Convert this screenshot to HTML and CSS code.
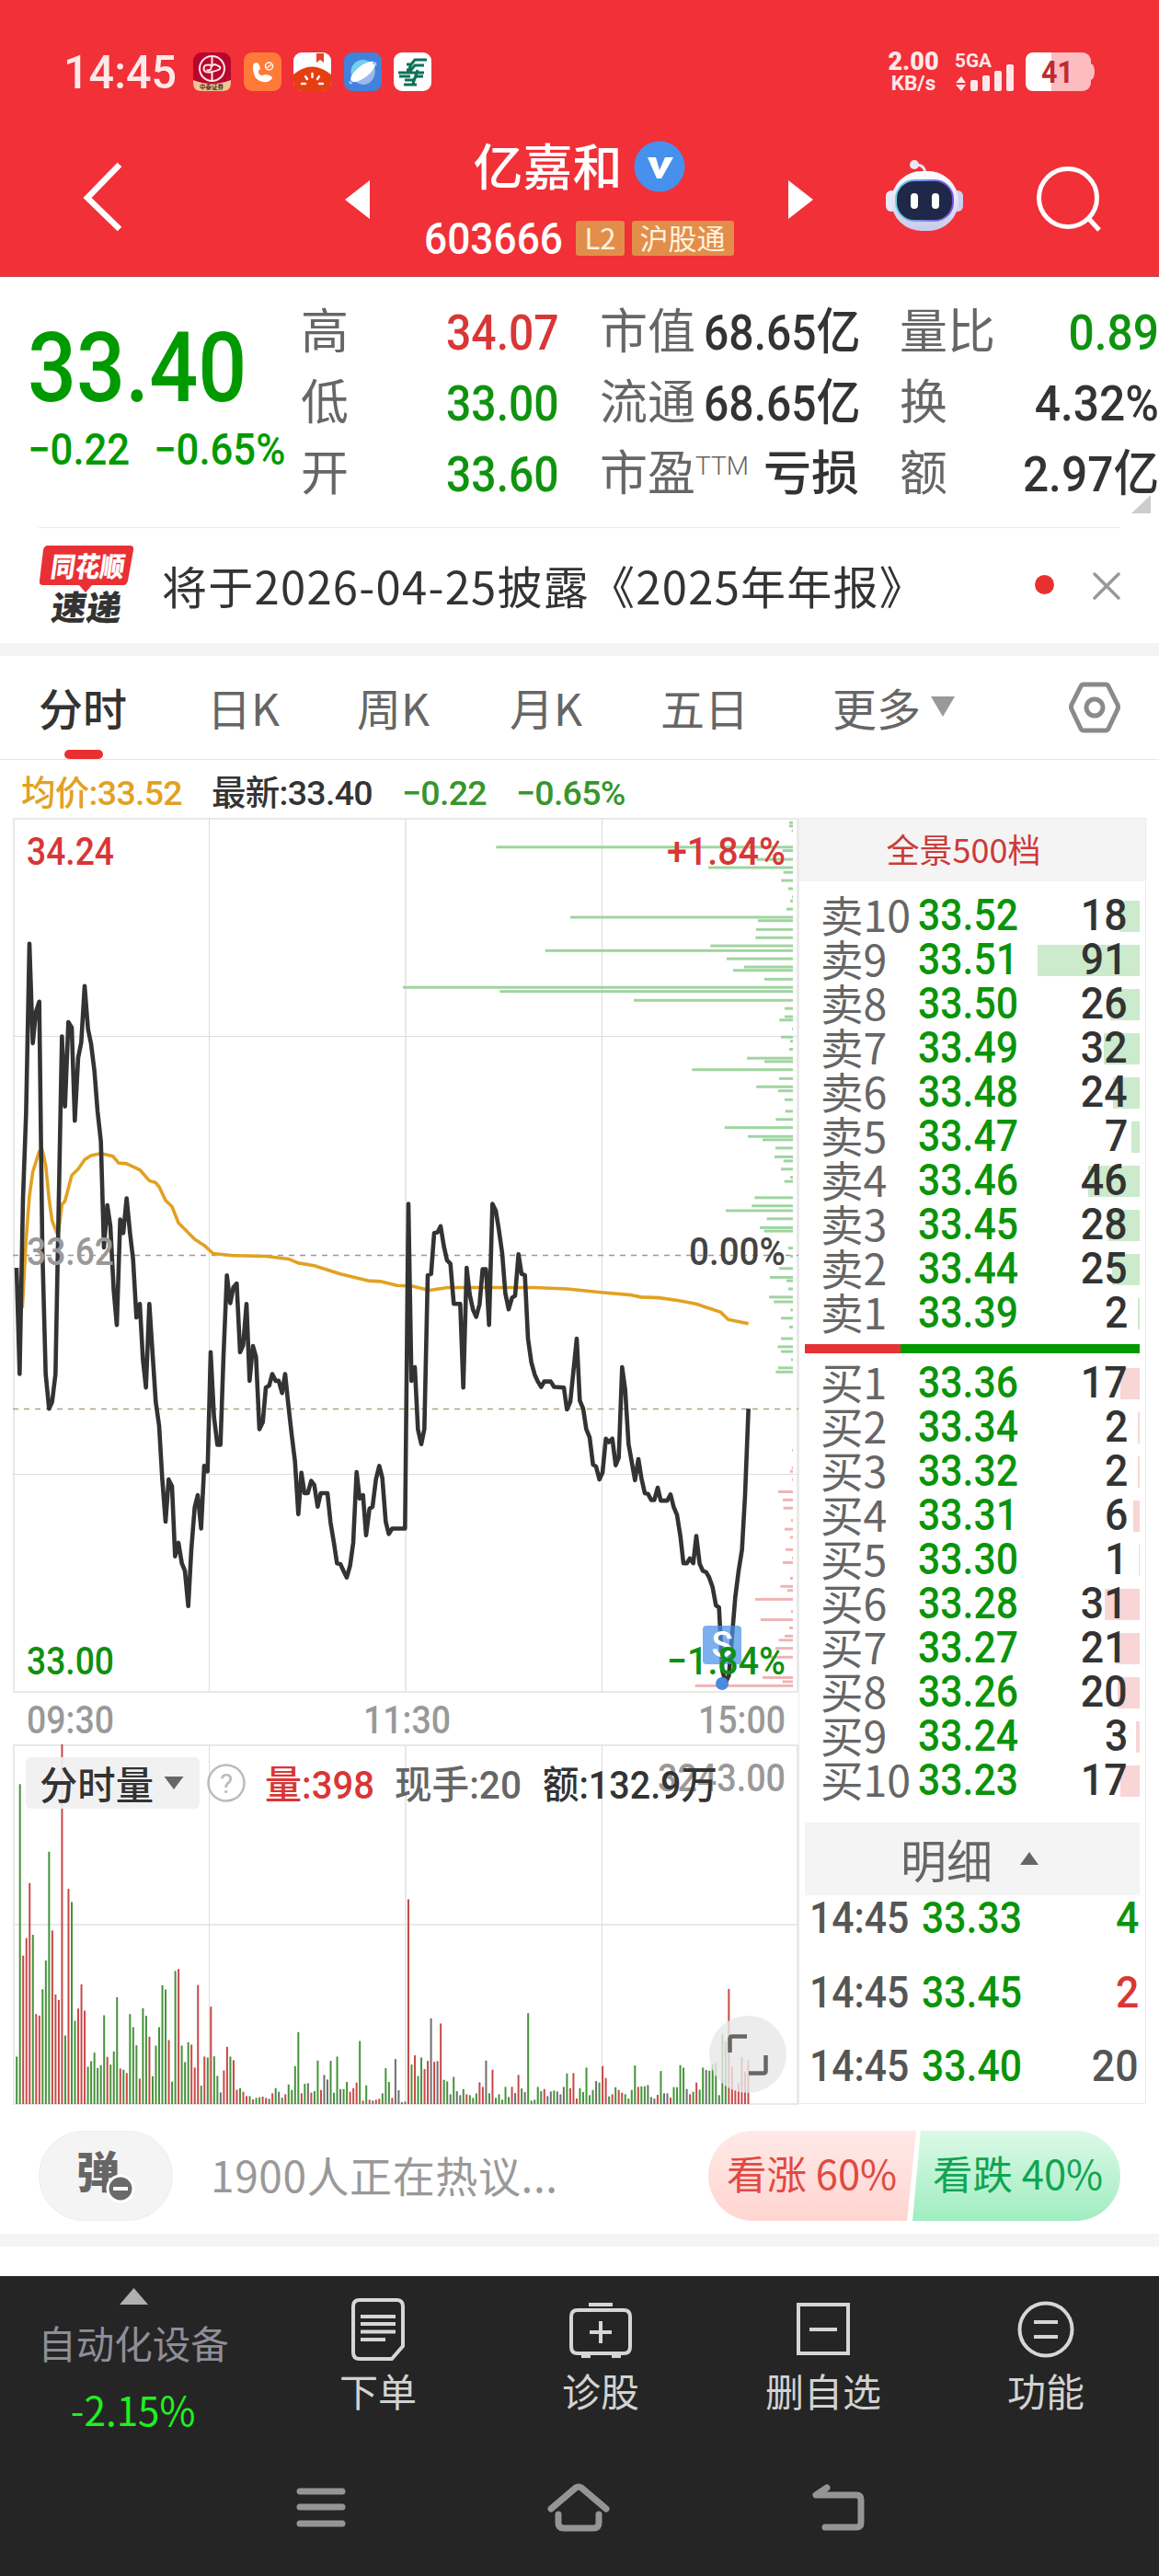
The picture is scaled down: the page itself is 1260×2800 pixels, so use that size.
FILE: index.html
```html
<!DOCTYPE html>
<html lang="zh-CN">
<head>
    <meta charset="UTF-8">
    <meta name="viewport" content="width=device-width, initial-scale=1.0">
    <title>亿嘉和 603666</title>
    <link rel="stylesheet" href="styles.css">
</head>
<body>
    <header class="header">
        <div class="status-bar">
            <span class="clock num">14:45</span>
            <div class="app-icons">
                <svg width="41" height="42" viewBox="0 0 41 42">
                    <rect width="41" height="42" rx="9" fill="#b8062f"/>
                    <path d="M0 30Q20 38 41 30V33Q41 42 32 42H9Q0 42 0 33Z" fill="#efc795"/>
                    <g fill="none" stroke="#ffe4e6" stroke-width="2"><circle cx="20.500" cy="17.500" r="13.500"/><path d="M20.500 4v10M20.500 22v9M20.500 14q-9-2-9 3.500t9 3.500q9-2 9-4t-6-4q-4 1-4 4t-5 2"/></g>
                    <text x="7" y="40" font-size="6.500" font-weight="700" fill="#5a3020">中泰证券</text>
                </svg>
                <svg width="41" height="42" viewBox="0 0 41 42">
                    <rect width="41" height="42" rx="9" fill="#ff7a38"/>
                    <path d="M11 12q4-3 6 2l1 4q-3 2-2 4 1 3 4 3l4-1q7 1 7 4-3 5-10 4-8-1-10-9-2-8 0-11z" fill="#fff"/>
                    <circle cx="27.500" cy="15" r="4" fill="none" stroke="#fff" stroke-width="1.500"/><path d="M25 17l5-4" stroke="#fff" stroke-width="1.500"/>
                </svg>
                <svg width="41" height="42" viewBox="0 0 41 42">
                    <rect width="41" height="42" rx="9" fill="#fff"/>
                    <path d="M25 1h8v10l-4-3-4 3z" fill="#e0452a"/>
                    <path d="M0 24Q20 7 41 24V33Q41 42 32 42H9Q0 42 0 33Z" fill="#e63e12"/>
                    <g stroke="#fff" stroke-width="2.400" stroke-linecap="round"><path d="M20.500 23v4M13 26l2 3M28 26l-2 3M9 34h4M28 34h4"/></g>
                </svg>
                <svg width="41" height="42" viewBox="0 0 41 42">
                    <rect width="41" height="42" rx="9" fill="#4281dc"/>
                    <circle cx="20.500" cy="21" r="13" fill="#73d0f0"/>
                    <path d="M33 14q3 14-7 20-9 3-15-4z" fill="#9bb8ec"/>
                    <ellipse cx="20.500" cy="21" rx="16" ry="6.500" transform="rotate(-38 20.500 21)" fill="#fff"/>
                    <path d="M7 31q-2 3 2 2M31 12q5-2 3 3" fill="none" stroke="#a9c4f2" stroke-width="2"/>
                </svg>
                <svg width="41" height="42" viewBox="0 0 41 42">
                    <rect width="41" height="42" rx="9" fill="#fff"/>
                    <g fill="none" stroke="#0c7157" stroke-width="3"><path d="M36 8H23l-4 5h-5M33 14H23l-4 5h-5M5 22h28M6 26h12M32 26h-7l-4 4h-9M25 35H11M19 13l-4 9M26 19l-5 15"/></g>
                </svg>
            </div>
            <div class="net-speed"><b>2.00</b><span>KB/s</span></div>
            <svg class="signal" width="66" height="42" viewBox="0 0 66 42">
                <text x="0" y="15.500" font-size="21" font-weight="700" fill="#ffe8ea" textLength="40" lengthAdjust="spacingAndGlyphs">5GA</text>
                <g fill="#ffe8ea"><path d="M1 33l6-7 5 7zM1 35l6 7 5-7z"/><rect x="17" y="30" width="8" height="12" rx="2"/><rect x="30" y="25" width="8" height="17" rx="2"/><rect x="43" y="20" width="8" height="22" rx="2"/><rect x="56" y="13" width="8" height="29" rx="2"/></g>
            </svg>
            <svg width="76" height="42" viewBox="0 0 76 42">
                <rect width="71" height="42" rx="9" fill="#fcbcc0"/><path d="M71 12q4 2 4 9t-4 9z" fill="#fcbcc0"/>
                <path d="M9 0H28V42H9Q0 42 0 33V9Q0 0 9 0Z" fill="#fff"/>
                <text x="17" y="33" font-size="33" font-weight="700" fill="#c02a2e" textLength="35" lengthAdjust="spacingAndGlyphs">41</text>
            </svg>
        </div>
        <div class="title-bar">
            <svg class="back" width="46" height="78" viewBox="0 0 46 78"><path d="M41 3L6 39l35 34" fill="none" stroke="#fff" stroke-width="6.500"/></svg>
            <svg width="27" height="42" viewBox="0 0 27 42"><path d="M27 0v42L0 21z" fill="#fff"/></svg>
            <div class="title">
                <div class="name">亿嘉和
                    <svg width="56" height="56" viewBox="0 0 56 56"><circle cx="28" cy="28" r="27.500" fill="#4791ec"/><path d="M15 18h9l4 14 6-14h9L30 41h-5z" fill="#fff"/></svg>
                </div>
                <div class="code">
                    <svg width="152" height="44" viewBox="0 0 152 44"><text x="0" y="41" font-size="49" font-weight="500" fill="#fff" textLength="151" lengthAdjust="spacingAndGlyphs">603666</text></svg>
                    <span class="tag">L2</span><span class="tag">沪股通</span>
                </div>
            </div>
            <svg width="27" height="42" viewBox="0 0 27 42"><path d="M0 0v42l27-21z" fill="#fff"/></svg>
            <svg class="robot" width="84" height="78" viewBox="0 0 84 78">
                <defs>
                    <linearGradient id="shell" x1="0" y1="0" x2="0" y2="1"><stop offset="0" stop-color="#fff"/><stop offset="1" stop-color="#c9c9ec"/></linearGradient>
                    <linearGradient id="rim" x1="0" y1="0" x2="1" y2="0"><stop offset="0" stop-color="#6bd0e8"/><stop offset="1" stop-color="#7a50e0"/></linearGradient>
                </defs>
                <path d="M31 5q11-1 12 9" fill="none" stroke="#e2e2f4" stroke-width="3"/><circle cx="31" cy="5" r="5" fill="#e8e8f8"/>
                <rect x="0" y="33" width="12" height="23" rx="6" fill="#e8e8f8"/><rect x="72" y="33" width="12" height="23" rx="6" fill="#cfcff0"/>
                <rect x="6" y="12" width="73" height="65" rx="33" fill="url(#shell)"/>
                <rect x="11" y="22" width="62" height="44" rx="20" fill="#1f2848" stroke="url(#rim)" stroke-width="2"/>
                <rect x="27" y="36" width="8" height="17" rx="4" fill="#fff"/><rect x="50" y="36" width="8" height="17" rx="4" fill="#fff"/>
            </svg>
            <svg class="search" width="72" height="72" viewBox="0 0 72 72" fill="none" stroke="#fff" stroke-width="5"><circle cx="35" cy="35" r="31.500"/><path d="M57 57l12 13"/></svg>
        </div>
    </header>

    <section class="quote">
        <div class="price-box">
            <div class="price num">33.40</div>
            <div class="change"><span class="num">−0.22</span><span class="num">−0.65%</span></div>
        </div>
        <div class="stats">
            <span>高</span><b class="num red">34.07</b><span>市值</span><b class="num">68.65亿</b><span>量比</span><b class="num green">0.89</b>
            <span>低</span><b class="num green">33.00</b><span>流通</span><b class="num">68.65亿</b><span>换</span><b class="num">4.32%</b>
            <span>开</span><b class="num green">33.60</b><span>市盈<sup>TTM</sup></span><b>亏损</b><span>额</span><b class="num">2.97亿</b>
        </div>
        <i class="corner"></i>
    </section>

    <section class="news">
        <svg width="106" height="90" viewBox="0 0 106 90">
            <path d="M10 1h89q5 0 4 5l-6 33q-1 5-5 5H58l-7 8-7-8H5q-5 0-4-5L5 6q1-5 5-5z" fill="#e93034"/>
            <g transform="skewX(-8)" font-weight="900"><text x="17" y="35" font-size="30" fill="#fff" textLength="80" lengthAdjust="spacingAndGlyphs">同花顺</text><text x="24" y="82" font-size="37" fill="#333" textLength="76" lengthAdjust="spacingAndGlyphs">速递</text></g>
        </svg>
        <span class="news-text">将于2026-04-25披露《2025年年报》</span>
        <i class="dot"></i>
        <svg width="30" height="30" viewBox="0 0 30 30"><path d="M2 2l26 26M28 2L2 28" stroke="#999" stroke-width="3.500" stroke-linecap="round"/></svg>
    </section>

    <nav class="tabs">
        <a class="active">分时</a><a>日K</a><a>周K</a><a>月K</a><a>五日</a>
        <a class="more">更多<svg width="26" height="22" viewBox="0 0 26 22"><path d="M0 0h26L13 22z" fill="#999"/></svg></a>
        <svg width="58" height="56" viewBox="0 0 58 56" fill="none" stroke="#8a8a8a" stroke-width="5"><path d="M17 3h24q2 0 3 2l10 20q1 3 0 5L44 51q-1 2-3 2H17q-2 0-3-2L4 30q-1-2 0-5L14 5q1-2 3-2z"/><circle cx="29" cy="28" r="9"/></svg>
    </nav>

    <div class="info-line">
        <span class="avg">均价:33.52</span><span>最新:33.40</span><span class="green">−0.22</span><span class="green">−0.65%</span>
    </div>

    <main class="market">
        <svg class="charts" width="856" height="1399" viewBox="14 889 856 1399">
            <g fill="none" stroke="#e9e9e9" stroke-width="2">
                <path d="M14 890H868M14 1839H868M14 1897H868M14 2092H868M14 2287H868M15 889V1839M867 889V1839M441 889V1839M15 1896V2287M867 1896V2287M441 1896V2287"/>
                <path d="M14 1126.500H868M14 1602.500H868M227.500 889V1839M654.500 889V1839M227.500 1896V2287M654.500 1896V2287" stroke="#ddd" stroke-width="1"/>
            </g>
            <g fill="none" stroke-width="1.300" stroke-dasharray="6 6"><path d="M14 1364.500H868" stroke="#999"/><path d="M14 1531.500H868" stroke="#b0a080"/></g>
            <!-- 分时走势 -->
            <svg x="14" y="889" width="854" height="950" viewBox="42 270 2562 1284" preserveAspectRatio="none">
                <g id="depth"></g>
                <polyline class="line avg-line" points="73,990 85,890 96,825 107,790 128,760 138,758 149,780 160,830 170,862 186,880 191,878 202,838 212,833 234,795 255,786 276,772 297,766 329,763 368,767 387,777 413,778 456,787 487,803 508,806 519,812 540,832 561,841 582,865 635,889 666,898 695,910 760,913 868,914 941,918 973,924 1025,928 1110,940 1200,950 1240,951 1295,957 1345,958 1400,964 1460,960 1740,960 1850,962 1960,967 2060,971 2090,974 2150,975 2210,979 2270,984 2310,990 2350,996 2375,1007 2441,1013"/>
                <polyline class="line price-line" points="54,931 64,1087 75,829 85,705 96,455 107,601 117,555 128,540 138,900 149,1087 160,1138 170,1128 181,1087 191,850 202,591 212,694 223,570 234,578 244,715 255,622 265,600 276,517 287,580 297,602 308,642 318,700 329,745 339,901 350,839 360,870 371,965 381,1015 392,860 402,880 413,829 424,880 434,918 445,1004 456,984 466,1065 476,1107 487,984 498,1060 508,1128 519,1163 529,1240 540,1304 550,1242 561,1252 571,1355 582,1335 593,1365 603,1376 614,1428 624,1345 635,1283 645,1265 656,1314 666,1222 677,1230 687,1055 698,1150 709,1191 719,1191 729,1060 740,942 751,983 761,960 772,954 783,1055 793,1045 804,984 814,1097 825,1046 835,1062 846,1168 857,1158 867,1107 878,1104 888,1087 899,1097 909,1097 920,1115 930,1087 941,1135 951,1175 962,1215 973,1293 983,1232 993,1262 1004,1262 1015,1244 1025,1250 1036,1282 1046,1262 1068,1262 1078,1305 1089,1335 1099,1365 1110,1366 1120,1376 1131,1386 1142,1368 1152,1335 1163,1231 1173,1270 1184,1265 1194,1324 1205,1285 1215,1282 1226,1242 1237,1222 1247,1240 1258,1304 1268,1322 1279,1314 1321,1314 1332,837 1342,1097 1353,1077 1363,1168 1374,1190 1384,1168 1395,942 1406,940 1416,880 1427,879 1437,870 1448,900 1458,920 1469,925 1480,984 1501,984 1511,1107 1522,931 1532,970 1543,993 1553,1003 1564,985 1574,933 1585,933 1595,1015 1606,837 1617,847 1627,875 1638,910 1648,968 1659,992 1670,975 1680,972 1691,911 1701,940 1712,942 1722,1035 1733,1070 1744,1088 1754,1098 1765,1106 1775,1098 1796,1098 1807,1106 1839,1107 1849,1139 1860,1128 1881,1035 1891,1126 1902,1138 1912,1168 1923,1180 1934,1220 1944,1223 1955,1242 1965,1232 1976,1182 1986,1187 1997,1182 2008,1221 2018,1210 2029,1077 2039,1110 2050,1190 2071,1243 2082,1212 2092,1240 2103,1262 2113,1263 2124,1272 2134,1272 2145,1254 2155,1273 2176,1273 2187,1264 2197,1282 2208,1294 2219,1325 2229,1365 2240,1365 2250,1358 2261,1365 2271,1325 2282,1366 2292,1376 2303,1378 2313,1386 2324,1400 2335,1427 2345,1430 2356,1523 2367,1540 2377,1530 2388,1470 2398,1415 2409,1376 2420,1345 2430,1265 2441,1138"/>
            </svg>
            <rect x="764" y="1767" width="42" height="42" rx="4" fill="#4a90e8" opacity=".72"/>
            <text x="785" y="1801" class="label mark" fill="#fff" text-anchor="middle">S</text>
            <circle cx="785" cy="1830" r="7" fill="#4a8ae0"/>
            <g class="label">
                <text x="29" y="940" fill="#d93636" textLength="95" lengthAdjust="spacingAndGlyphs">34.24</text>
                <text x="725" y="940" fill="#d93636" textLength="129" lengthAdjust="spacingAndGlyphs">+1.84%</text>
                <text x="29" y="1375" fill="#999" textLength="95" lengthAdjust="spacingAndGlyphs">33.62</text>
                <text x="749" y="1375" fill="#444" textLength="105" lengthAdjust="spacingAndGlyphs">0.00%</text>
                <text x="29" y="1820" fill="#0f900f" textLength="95" lengthAdjust="spacingAndGlyphs">33.00</text>
                <text x="725" y="1820" fill="#0f900f" textLength="129" lengthAdjust="spacingAndGlyphs">−1.84%</text>
                <text x="29" y="1884" fill="#999" textLength="95" lengthAdjust="spacingAndGlyphs">09:30</text>
                <text x="395" y="1884" fill="#999" textLength="95" lengthAdjust="spacingAndGlyphs">11:30</text>
                <text x="759" y="1884" fill="#999" textLength="95" lengthAdjust="spacingAndGlyphs">15:00</text>
                <text x="715" y="1947" fill="#999" textLength="139" lengthAdjust="spacingAndGlyphs">3243.00</text>
            </g>
            <!-- 分时量 -->
            <svg x="14" y="1896" width="854" height="391" viewBox="42 168 2562 1175" preserveAspectRatio="none"><g id="volume"></g></svg>
            <rect x="28" y="1910" width="189" height="56" rx="6" fill="#f0f0f0" opacity=".92"/>
            <path d="M178.500 1931h21l-10.500 14z" fill="#666"/>
            <circle cx="246" cy="1938" r="19.500" fill="none" stroke="#bbb" stroke-width="2.500"/>
            <g class="label">
                <text x="43" y="1956" fill="#333" textLength="124" lengthAdjust="spacingAndGlyphs">分时量</text>
                <text x="246" y="1949" class="help" fill="#bbb" text-anchor="middle">?</text>
                <text x="288" y="1955" fill="#d93636" textLength="119" lengthAdjust="spacingAndGlyphs">量:398</text>
                <text x="429" y="1955" fill="#666" textLength="138" lengthAdjust="spacingAndGlyphs">现手:20</text>
                <text x="590" y="1955" fill="#333" textLength="190" lengthAdjust="spacingAndGlyphs">额:132.9万</text>
            </g>
            <circle cx="813" cy="2233" r="42" fill="#e8e8e8" opacity=".82"/>
            <path d="M793.500 2231V2216q0-2.500 2.500-2.500H812M832.500 2234v17q0 2.500-2.500 2.500H814" fill="none" stroke="#666" stroke-width="4.500"/>
        </svg>

        <aside class="book">
            <div class="book-head">全景500档</div>
            <div class="orders sell" id="sell"></div>
            <div class="ratio"><i></i></div>
            <div class="orders buy" id="buy"></div>
            <div class="detail-head">明细<svg width="20" height="14" viewBox="0 0 20 14"><path d="M0 14h20L10 0z" fill="#666"/></svg></div>
            <div class="ticks">
                <div class="tick"><span class="num">14:45</span><b class="num">33.33</b><em class="num green">4</em></div>
                <div class="tick"><span class="num">14:45</span><b class="num">33.45</b><em class="num red">2</em></div>
                <div class="tick"><span class="num">14:45</span><b class="num">33.40</b><em class="num">20</em></div>
            </div>
        </aside>
    </main>

    <section class="discuss">
        <div class="danmu">弹<svg width="32" height="32" viewBox="0 0 32 32"><circle cx="16" cy="16" r="14" fill="#6a6a6a" stroke="#fff" stroke-width="3"/><path d="M8 16h16" stroke="#fff" stroke-width="4"/></svg></div>
        <span class="hot">1900人正在热议...</span>
        <div class="vote up">看涨 60%</div>
        <div class="vote down">看跌 40%</div>
    </section>

    <footer class="footer">
        <div class="toolbar">
            <div class="sector">
                <svg width="31" height="18" viewBox="0 0 31 18"><path d="M0 18h31L15.500 0z" fill="#b0b0b0"/></svg>
                <span>自动化设备</span>
                <b>-2.15%</b>
            </div>
            <div class="tool">
                <svg width="62" height="72" viewBox="0 0 62 72"><path d="M11 3h40q7 0 7 7v43L46 67H11q-7 0-7-7V10q0-7 7-7z"/><path d="M12 21h38M12 29h38M12 37.500h38M12 46h27"/></svg>
                下单
            </div>
            <div class="tool">
                <svg width="68" height="72" viewBox="0 0 68 72"><path d="M21 8h26M9 14h50q7 0 7 7v33q0 7-7 7H9q-7 0-7-7V21q0-7 7-7zM22 38h24M34 26v24M13 64h10M46 64h10"/></svg>
                诊股
            </div>
            <div class="tool">
                <svg width="62" height="72" viewBox="0 0 62 72"><path d="M4 8h54v53H4zM16 35h30"/></svg>
                删自选
            </div>
            <div class="tool">
                <svg width="62" height="72" viewBox="0 0 62 72"><circle cx="31" cy="35" r="28.500"/><path d="M18 27h26M18 43h26"/></svg>
                功能
            </div>
        </div>
        <div class="sys-nav">
            <svg width="54" height="44" viewBox="0 0 54 44"><path d="M4 5h46M4 22h46M4 40h46"/></svg>
            <svg width="70" height="54" viewBox="0 0 70 54"><path d="M5 29L32 6q3-2 6 0l27 23M13 35v9q0 6 6 6h32q6 0 6-6V35"/></svg>
            <svg width="60" height="54" viewBox="0 0 60 54"><path d="M17 6L5 14H49q5 0 5 5v25q0 5-5 5H15"/></svg>
        </div>
    </footer>
    <script src="chart.js"></script>
</body>
</html>
```
FILE: styles.css
```css
* { box-sizing: border-box; }
body { margin: 0; width: 1260px; background: #fff; color: #333; font-family: Roboto, "Noto Sans CJK SC", sans-serif; }
svg { display: block; flex: none; }
i, em { font-style: normal; }
.num { display: inline-block; font-weight: 500; white-space: nowrap; transform: scaleX(.89); transform-origin: left center; }
.green { color: #0f930f; }
.red { color: #d93636; }

.header { height: 301px; background: #f13038; border-bottom: 1px solid #b5484e; color: #fff; }
.status-bar { display: flex; height: 116px; padding: 57px 0 0 69px; }
.header .clock { width: 141px; font-size: 50px; line-height: 45px; color: #ffe8ea; transform: scaleX(.97); }
.app-icons { display: flex; gap: 13.5px; }
.net-speed { display: flex; flex-direction: column; align-items: center; width: 60px; margin-left: 494px; font-size: 23px; line-height: 21px; color: #ffe8ea; font-weight: 700; }
.net-speed b { font-size: 27px; }
.net-speed span { font-size: 22.5px; line-height: 25px; }
.signal { margin: 0 11px 0 15px; }
.title-bar { display: flex; height: 184px; }
.title-bar > svg { margin-top: 80px; }
.title-bar > .back { margin: 60px 240px 0 89px; }
.title { width: 455px; padding-top: 36px; }
.name { display: flex; justify-content: center; align-items: center; gap: 12px; height: 60px; padding-top: 3px; font-size: 54px; font-weight: 500; line-height: 60px; }
.name svg { margin-top: -5px; }
.code { display: flex; justify-content: center; align-items: center; gap: 8px; margin-top: 27px; height: 39px; }
.code svg { margin: -4px 5px 0 0; }
.tag { height: 38px; padding: 0 9px; border-radius: 3px; background: #e28e4a; color: #fff2df; font-family: "Noto Sans CJK SC", sans-serif; font-size: 31px; line-height: 35px; }

.title-bar > .robot { margin: 58px 0 0 79px; }
.title-bar > .search { margin: 64px 0 0 79px; }

.quote { position: relative; display: flex; height: 272px; overflow: hidden; }
.price-box { width: 327px; padding: 47px 0 0 30px; color: #009a00; }
.price { font-size: 105px; line-height: 105px; }
.change { display: flex; height: 60px; margin-top: 6px; font-size: 48px; line-height: 60px; }
.change .num { width: 137px; transform: scaleX(.91); }
.stats { display: grid; grid-template-columns: 85px 240px 100px 226px 110px 172px; grid-auto-rows: 77px; margin-top: 22px; font-size: 52px; line-height: 77px; }
.stats span { color: #666; white-space: nowrap; }
.stats b { justify-self: start; font-size: 54px; font-weight: 500; }
.stats b:nth-child(6n+2) { margin-left: 73px; }
.stats b:nth-child(6n+4) { margin-left: 13px; }
.stats b:nth-child(16) { margin-left: 78px; font-size: 52px; }
.stats b:nth-child(6n) { justify-self: end; transform: scaleX(.92); transform-origin: right center; }
.stats sup { font-size: 28px; font-weight: 300; line-height: 0; vertical-align: 17px; }
.corner { position: absolute; left: 1230px; top: 237px; width: 21px; height: 20px; background: #ccc; clip-path: polygon(100% 0, 100% 100%, 0 100%); }

.news { display: flex; align-items: center; height: 126px; margin: 0 42px; border-top: 1px solid #e9e9e9; }
.news-text { width: 949px; padding-left: 28px; font-family: "Noto Sans CJK SC", sans-serif; font-size: 49px; letter-spacing: 1.25px; line-height: 118px; padding-bottom: 2px; white-space: nowrap; }
.dot { width: 21px; height: 21px; margin: -2px 42px 0 31px; border-radius: 50%; background: #e93030; }

.tabs { display: grid; grid-template-columns: 183px 163px 166px 164px 187px 256px 58px; align-items: center; height: 127px; padding: 0 0 0 42px; border-top: 14px solid #f4f4f4; border-bottom: 1px solid #e6e6e6; font-family: "Noto Sans CJK SC", sans-serif; font-size: 48px; color: #666; }
.tabs a { display: flex; align-items: center; height: 112px; padding-bottom: 2px; }
.tabs .active { position: relative; color: #333; font-weight: 500; }
.tabs .active::after { content: ""; position: absolute; left: 28px; bottom: 0; width: 42px; height: 10px; border-radius: 5px; background: #e93030; }
.more svg { margin-left: 11px; }
.info-line { display: flex; gap: 32px; height: 63px; padding: 3px 0 0 23px; font-size: 37.5px; font-weight: 500; line-height: 66px; letter-spacing: -.7px; white-space: nowrap; }
.info-line .avg { color: #e2a122; }
.info-line .green { color: #36962a; }

.market { display: flex; height: 1398px; padding-left: 14px; }
.label { font-size: 42px; font-weight: 500; }
.mark { font-size: 38px; }
.help { font-size: 30px; font-weight: 400; }
.line { fill: none; stroke-linejoin: round; vector-effect: non-scaling-stroke; }
.price-line { stroke: #333; stroke-width: 4.6px; }
.avg-line { stroke: #e2a122; stroke-width: 3.6px; }
.book { width: 378px; margin-left: -2px; border: 1px solid #eaeaea; }
.book-head { height: 68px; padding-right: 19px; background: #f4f4f4; color: #cc3a3a; text-align: center; font-family: "Noto Sans CJK SC", sans-serif; font-size: 36px; line-height: 65px; }
.orders { margin: 0 6px; }
.sell { padding-top: 13px; }
.buy { padding-top: 8px; height: 510px; }
.order { position: relative; display: flex; height: 48px; padding-left: 17px; font-size: 48px; line-height: 48px; }
.order span { width: 106px; color: #666; font-family: "Noto Sans CJK SC", sans-serif; font-size: 46.5px; line-height: 43px; white-space: nowrap; }
.order b { width: 140px; color: #0a940a; }
.order em { margin-left: auto; margin-right: 13px; transform: scaleX(.93); transform-origin: right center; color: #333; }
.order i { position: absolute; right: 0; top: 8px; height: 34px; background: #cceacc; z-index: -1; }
.buy .order i { background: #f9d5d5; }
.ratio { height: 10px; margin: 10px 6px 0; background: #009a00; }
.ratio i { display: block; width: 104px; height: 10px; background: #e53333; }
.detail-head { display: flex; align-items: center; gap: 30px; height: 79px; margin: 0 6px; padding: 0 0 2px 104px; background: #f4f4f4; color: #666; font-family: "Noto Sans CJK SC", sans-serif; font-size: 50px; line-height: 70px; }
.ticks { display: flex; flex-direction: column; gap: 32.5px; margin: 1px 6px 0; }
.tick { display: flex; height: 48px; padding-left: 5px; font-size: 48px; line-height: 48px; color: #555; }
.tick span { width: 122px; }
.tick b { color: #0a940a; }
.tick em { margin: 0 1px 0 auto; transform: scaleX(.93); transform-origin: right center; }

.discuss { display: flex; height: 155px; padding: 29px 0 0 42px; border-bottom: 14px solid #f4f4f4; font-family: "Noto Sans CJK SC", sans-serif; }
.danmu { position: relative; width: 146px; height: 98px; padding-left: 40px; border: 1px solid #eee; border-radius: 49px; background: #f4f4f4; color: #666; font-size: 47px; font-weight: 900; line-height: 82px; }
.danmu svg { position: absolute; left: 72px; top: 46px; }
.hot { width: 582px; padding-left: 41px; color: #999; font-size: 46px; letter-spacing: .6px; line-height: 95px; }
.vote { width: 226px; height: 98px; padding-left: 20px; font-size: 43.5px; line-height: 92px; white-space: nowrap; }
.up { border-radius: 49px 0 0 49px; background: linear-gradient(#ffe9e7, #ffd5d1); color: #e04a42; clip-path: polygon(0 0, 100% 0, 216px 100%, 0 100%); }
.down { margin-left: -4px; padding-left: 22px; border-radius: 0 49px 49px 0; background: linear-gradient(#dcf9e7, #a0edc1); color: #10a552; clip-path: polygon(9px 0, 100% 0, 100% 100%, 0 100%); }

.footer { height: 326px; margin-top: 32px; background: #252525; font-family: "Noto Sans CJK SC", sans-serif; }
.toolbar { display: grid; grid-template-columns: 290px repeat(4, 242px); height: 216px; }
.sector { display: flex; flex-direction: column; align-items: center; padding-top: 13px; color: #8e8e98; font-size: 41.5px; line-height: 60px; }
.sector span { margin-top: 11px; }
.sector b { margin-top: 12px; color: #20f020; font-size: 44px; font-weight: 400; transform: scaleX(.96); }
.tool { display: flex; flex-direction: column; align-items: center; padding-top: 23px; color: #d2d2d2; font-size: 42px; line-height: 58px; }
.tool svg { fill: none; stroke: #d6d6d6; stroke-width: 4; }
.sys-nav { display: flex; align-items: center; justify-content: center; gap: 218px; height: 70px; padding-left: 4px; }
.sys-nav svg { fill: none; stroke: #959595; stroke-width: 7; stroke-linecap: round; stroke-linejoin: round; }
```
FILE: chart.js
```javascript
const sell = [[10, '33.52', 18], [9, '33.51', 91], [8, '33.50', 26], [7, '33.49', 32], [6, '33.48', 24], [5, '33.47', 7], [4, '33.46', 46], [3, '33.45', 28], [2, '33.44', 25], [1, '33.39', 2]];
const buy = [[1, '33.36', 17], [2, '33.34', 2], [3, '33.32', 2], [4, '33.31', 6], [5, '33.30', 1], [6, '33.28', 31], [7, '33.27', 21], [8, '33.26', 20], [9, '33.24', 3], [10, '33.23', 17]];

function renderOrders(id, name, rows) {
    document.getElementById(id).innerHTML = rows.map(([level, price, qty]) => `
        <div class="order"><span>${name}${level}</span><b class="num">${price}</b><em class="num">${qty}</em><i style="width: ${qty * 1.22}px"></i></div>
    `).join('');
}
renderOrders('sell', '卖', sell);
renderOrders('buy', '买', buy);

// 每分钟成交量: 颜色 + 柱顶坐标
const volume = 'g1188 g298 r858 r801 r621 g790 r1049 r1054 g968 g874 g519 r776 r985 r1003 r168 g1119 r640 g683 g1071 r1031 r952 r1038 g1221 g1203 g1175 g1225 g1216 g1053 r1189 g1214 g1171 g994 r1227 g1231 r1242 g1049 g1092 g1151 r1260 g1030 g1055 r1123 g1252 g1152 g1092 g955 g969 r1134 g1270 g908 r902 g1152 g1206 g1141 r1149 r1224 r954 g1283 r1188 g1191 r1025 g1187 g1251 k1305 r1233 r1156 g1188 r1200 r1296 g1291 r1303 r1317 g1317 r1328 g1323 g1321 r1319 r1323 k1326 r1308 g1291 k1303 g1322 r1311 g1279 g1297 g1219 g1108 r1308 g1277 k1275 r1306 g1301 g1201 r1297 k1248 k1263 g1202 g1306 g1188 k1294 g1294 g1271 r1303 r1291 r1273 g1137 r1332 g1282 r1329 k1332 r1329 r1326 g1308 g1226 g1271 r1323 k1196 k1298 k1337 k1335 r674 g1214 r1184 g1251 g1191 r1229 r1202 k1063 r1205 k1203 r1080 g1264 g1269 k1311 g1254 k1301 k1314 g1294 r1311 g1314 g1323 g1308 r1272 r1287 k1201 g1308 r1231 g1323 g1311 g1329 g1287 g1320 r1287 k1307 r1248 g1292 k1304 g1046 g1332 g1329 g1287 g1301 r1294 k1317 k1302 g1299 k1302 k1311 k1287 g1243 r1291 r1242 r1325 g1291 g1304 g1224 g1314 g1297 k1268 g1273 r1219 r1258 g1318 r1311 g1288 r1297 r1306 g1311 g1325 g1297 g1217 r1287 g1285 g1285 k1281 g1320 k1325 r1313 g1235 k1308 k1308 r1322 g1288 g1288 g1216 g1224 k1294 r1311 g1303 r1273 g1296 g1224 k1232 g1234 g1213 g1209 k1314 g1114 g1138 r967 r1221 r1297 r1275 r1190 r1237 r1200';
const colors = { g: '#45933a', r: '#c94848', k: '#6e6e6e' };
document.getElementById('volume').innerHTML = volume.split(' ').map((bar, i) => {
    const top = Number(bar.slice(1));
    return `<rect x="${51.5 + i * 10.557}" y="${top}" width="6" height="${1343 - top}" fill="${colors[bar[0]]}"/>`;
}).join('');

// 挂单分布: [纵坐标, 左端]
const asks = [[277, 1284], [282, 1284], [289, 1292], [313, 328], [318, 1262], [331, 1177], [343, 1020], [350, 1265], [362, 1258], [374, 1281], [386, 1293], [392, 1287], [404, 1275], [416, 570], [421, 1182], [434, 1176], [446, 1174], [458, 1027], [465, 488], [477, 1080], [489, 1137], [494, 1101], [507, 1203], [519, 24], [525, 340], [538, 777], [550, 1269], [562, 1269], [567, 1252], [580, 1293], [592, 1257], [598, 1287], [610, 1284], [623, 1146], [628, 1203], [640, 967], [653, 1251], [665, 1177], [671, 1248], [684, 1269], [701, 1271], [713, 1240], [725, 1073], [738, 1149], [743, 1197], [755, 1239], [768, 1236], [774, 1265], [786, 1257], [798, 1287], [804, 1268], [828, 1171], [840, 1162], [847, 1077], [859, 1211], [872, 1188], [877, 1202], [902, 1281], [914, 1287], [932, 1251], [945, 1221], [950, 1275], [962, 1281], [974, 1218], [981, 1234], [993, 1288], [1005, 1257], [1018, 1284], [1035, 1257], [1047, 1246], [1054, 1257], [1066, 1290], [1078, 1248], [1084, 1240]];
const bids = [[1199, 1293], [1225, 1292], [1230, 1287], [1242, 1293], [1260, 1248], [1272, 1263], [1284, 1265], [1302, 1290], [1315, 1269], [1327, 1287], [1345, 1272], [1357, 1293], [1364, 1263], [1387, 1287], [1399, 1255], [1405, 1278], [1418, 1173], [1436, 1290], [1448, 1191], [1460, 1284], [1472, 1269], [1478, 1250], [1490, 1239], [1503, 1221], [1533, 1197], [1539, 1262], [1545, 977]];
const depthBars = (rows, color) => rows.map(([y, x]) => `<rect x="${x + 1290}" y="${y - 2}" width="${1296 - x}" height="4" fill="${color}"/>`).join('');
document.getElementById('depth').innerHTML = depthBars(asks, '#9fd49f') + depthBars(bids, '#efb4b4');
```
